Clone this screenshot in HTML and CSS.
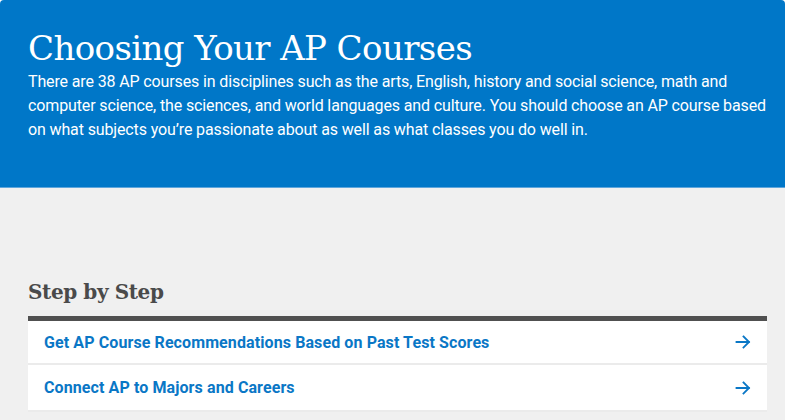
FILE: index.html
```html
<!DOCTYPE html>
<html lang="en">
<head>
<meta charset="utf-8">
<title>Choosing Your AP Courses</title>
<link rel="stylesheet" href="styles.css">
</head>
<body>
<header class="hero">
  <h1 class="hero-title">Choosing Your AP Courses</h1>
  <p class="hero-text">There are 38 AP courses in disciplines such as the arts, English, history and social science, math and computer science, the sciences, and world languages and culture. You should choose an AP course based on what subjects you’re passionate about as well as what classes you do well in.</p>
</header>
<main class="content">
  <h2 class="section-title">Step by Step</h2>
  <ul class="steps">
    <li class="step">
      <a class="step-link" href="#">Get AP Course Recommendations Based on Past Test Scores</a>
      <svg class="arrow" width="16" height="16" viewBox="0 0 16 16" aria-hidden="true"><path d="M1.5 8H14M8.5 2.5L14 8L8.5 13.5" fill="none" stroke="currentColor" stroke-width="1.8" stroke-linecap="square"/></svg>
    </li>
    <li class="step">
      <a class="step-link" href="#">Connect AP to Majors and Careers</a>
      <svg class="arrow" width="16" height="16" viewBox="0 0 16 16" aria-hidden="true"><path d="M1.5 8H14M8.5 2.5L14 8L8.5 13.5" fill="none" stroke="currentColor" stroke-width="1.8" stroke-linecap="square"/></svg>
    </li>
  </ul>
</main>
</body>
</html>
```
FILE: styles.css
```css
html, body {
  margin: 0;
  padding: 0;
  background: #ffffff;
}
body {
  font-family: Roboto, "Liberation Sans", sans-serif;
}
.hero {
  background: #0077c8;
  border-radius: 4px 4px 0 0;
  border-bottom: 1px solid #5fa6dc;
  color: #ffffff;
  padding: 26px 17px 45px 28px;
  height: 116px;
}
.hero-title {
  margin: 0;
  font-family: "DejaVu Serif", serif;
  font-weight: normal;
  font-size: 34px;
  line-height: 44px;
  letter-spacing: -0.6px;
}
.hero-text {
  margin: 0;
  font-size: 16px;
  line-height: 24px;
  letter-spacing: -0.13px;
  max-width: 740px;
}
.content {
  background: #f0f0f0;
  padding: 90px 18px 8px 28px;
}
.section-title {
  margin: 0 0 10px 0;
  font-family: "DejaVu Serif", serif;
  font-weight: bold;
  font-size: 20px;
  line-height: 28px;
  letter-spacing: -0.4px;
  color: #4a4a4a;
}
.steps {
  list-style: none;
  margin: 0;
  padding: 0;
  border-top: 5px solid #505050;
}
.step {
  display: flex;
  align-items: center;
  justify-content: space-between;
  height: 42px;
  padding: 0 16px 0 16px;
  background: #ffffff;
  border-bottom: 2px solid #ebebeb;
}
.step + .step {
  height: 45px;
}
.step-link {
  color: #0a77c6;
  font-weight: bold;
  font-size: 16px;
  letter-spacing: 0.1px;
  text-decoration: none;
}
.arrow {
  color: #0a77c6;
}
```
